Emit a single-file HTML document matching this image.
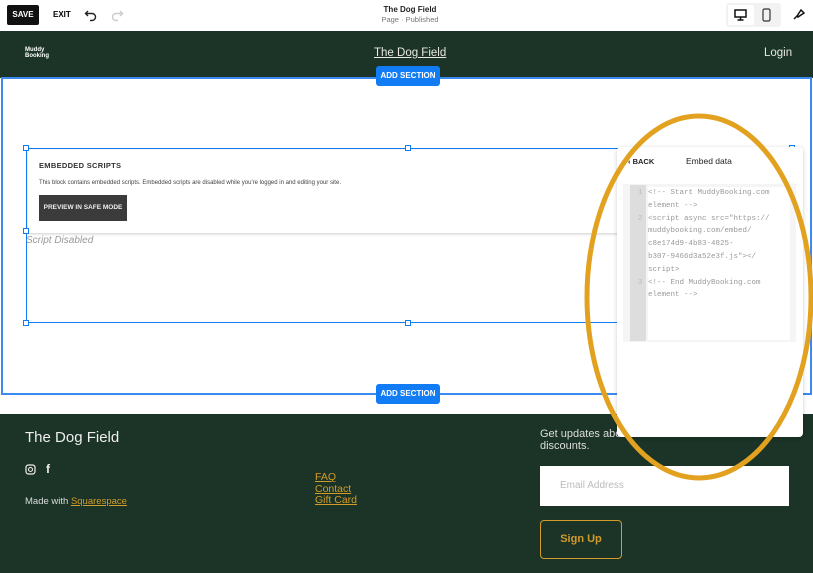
<!DOCTYPE html><html><head><style>
*{margin:0;padding:0;box-sizing:border-box}
body{width:813px;height:573px;overflow:hidden;font-family:"Liberation Sans",sans-serif;background:#fff;position:relative}
.a{position:absolute}
.dk{background:#1b3427}
.btn{background:#127cf5;color:#fff;font-size:8px;font-weight:bold;border-radius:3px;text-align:center;line-height:20px;width:64px;height:20px}
.h{width:6px;height:6px;border:1px solid #127cf5;background:#fff}
.code{font-family:"Liberation Mono",monospace;font-size:7.5px;color:#999;line-height:12.8px}
a{color:#d29c2a;text-decoration:underline}
</style></head><body>
<div class="a" style="left:7px;top:5px;width:32px;height:20px;background:#111;border-radius:2px;color:#fff;font-size:8px;font-weight:bold;text-align:center;line-height:20px">SAVE</div>
<div class="a" style="left:53px;top:10px;font-size:8px;font-weight:bold">EXIT</div>
<svg class="a" style="left:84px;top:8px" width="14" height="14" viewBox="0 0 14 14"><path d="M4 3L1.5 5.5 4 8M2 5.5h6a3.5 3.5 0 010 7H6" fill="none" stroke="#222" stroke-width="1.4"/></svg>
<svg class="a" style="left:110px;top:8px" width="14" height="14" viewBox="0 0 14 14"><path d="M10 3l2.5 2.5L10 8M12 5.5H6a3.5 3.5 0 000 7h2" fill="none" stroke="#ccc" stroke-width="1.4"/></svg>
<div class="a" style="left:330px;top:5px;width:160px;text-align:center;font-size:8px;font-weight:bold;color:#222">The Dog Field</div>
<div class="a" style="left:330px;top:15px;width:160px;text-align:center;font-size:7.5px;color:#777">Page · Published</div>
<div class="a" style="left:726px;top:3px;width:55px;height:24px;background:#f2f2f2;border-radius:3px"></div>
<div class="a" style="left:728px;top:5px;width:26px;height:20px;background:#fff;border-radius:2px"></div>
<svg class="a" style="left:734px;top:9px" width="13" height="12"><rect x="1" y="1" width="11" height="7" fill="none" stroke="#111" stroke-width="1.5"/><path d="M6.5 8v3M3.5 11h6" stroke="#111" stroke-width="1.5"/></svg>
<svg class="a" style="left:762px;top:8px" width="9" height="14"><rect x="1" y="1" width="7" height="12" rx="1.5" fill="none" stroke="#333" stroke-width="1.2"/></svg>
<svg class="a" style="left:792px;top:7px" width="14" height="14"><path d="M2 12l4-4M5 9l4-6 3 3-6 4z" fill="none" stroke="#111" stroke-width="1.5"/></svg>
<div class="a dk" style="left:0;top:31px;width:813px;height:47px"></div>
<div class="a" style="left:25px;top:47px;color:#fff;font-size:6px;font-weight:bold;line-height:6px">Muddy<br>Booking</div>
<div class="a" style="left:374px;top:47px;color:#e8e8e0;font-size:11.5px;text-decoration:underline">The Dog Field</div>
<div class="a" style="left:764px;top:47px;color:#e8e8e0;font-size:11.5px">Login</div>
<div class="a" style="left:1px;top:77px;width:811px;height:318px;border:2px solid #3b8af0"></div>
<div class="a" style="left:26px;top:148px;width:768px;height:175px;border:1.5px solid #127cf5"></div>
<div class="a" style="left:28px;top:150px;width:766px;height:83px;background:#fff;box-shadow:0 1px 3px rgba(0,0,0,.2)"></div>
<div class="a" style="left:39px;top:161px;font-size:7.5px;font-weight:bold;color:#333;letter-spacing:.3px">EMBEDDED SCRIPTS</div>
<div class="a" style="left:39px;top:180px;font-size:6px;color:#444">This block contains embedded scripts. Embedded scripts are disabled while you're logged in and editing your site.</div>
<div class="a" style="left:39px;top:195px;width:88px;height:26px;background:#3b3b3b;color:#eee;font-size:6.5px;font-weight:bold;text-align:center;line-height:26px">PREVIEW IN SAFE MODE</div>
<div class="a" style="left:26px;top:235px;font-size:10px;font-style:italic;color:#999">Script Disabled</div>
<div class="a h" style="left:23px;top:145px"></div><div class="a h" style="left:405px;top:145px"></div><div class="a h" style="left:23px;top:228px"></div><div class="a h" style="left:23px;top:320px"></div><div class="a h" style="left:405px;top:320px"></div><div class="a h" style="left:789px;top:145px"></div>
<div class="a dk" style="left:0;top:414px;width:813px;height:159px"></div>
<div class="a btn" style="left:376px;top:66px">ADD SECTION</div>
<div class="a btn" style="left:376px;top:384px">ADD SECTION</div>
<div class="a" style="left:25px;top:429px;color:#eee;font-size:15px">The Dog Field</div>
<svg class="a" style="left:25px;top:464px" width="11" height="11"><rect x="1" y="1" width="9" height="9" rx="2.5" fill="none" stroke="#eee" stroke-width="1.2"/><circle cx="5.5" cy="5.5" r="2" fill="none" stroke="#eee" stroke-width="1.1"/></svg>
<div class="a" style="left:46px;top:462px;color:#eee;font-size:12px;font-weight:bold">f</div>
<div class="a" style="left:25px;top:496px;color:#ddd;font-size:9.5px">Made with <a>Squarespace</a></div>
<div class="a" style="left:315px;top:472px;font-size:10.5px;line-height:11.7px"><a>FAQ</a><br><a>Contact</a><br><a>Gift Card</a></div>
<div class="a" style="left:540px;top:428px;color:#ddd;font-size:11px;line-height:12px">Get updates about<br>discounts.</div>
<div class="a" style="left:540px;top:466px;width:249px;height:40px;background:#fff"></div>
<div class="a" style="left:560px;top:480px;color:#bbb;font-size:10px">Email Address</div>
<div class="a" style="left:540px;top:520px;width:82px;height:39px;border:1.5px solid #d29c2a;border-radius:4px;color:#d29c2a;font-size:11px;font-weight:bold;text-align:center;line-height:36px">Sign Up</div>
<div class="a" style="left:617px;top:147px;width:186px;height:290px;background:#fff;border-radius:4px;box-shadow:0 1px 4px rgba(0,0,0,.2)"></div>
<div class="a" style="left:628px;top:157px;font-size:7.5px;font-weight:bold;color:#222">‹ BACK</div>
<div class="a" style="left:686px;top:156px;font-size:8.5px;color:#222">Embed data</div>
<div class="a" style="left:623px;top:184px;width:173px;height:158px;background:#f5f5f5"></div>
<div class="a" style="left:630px;top:185px;width:16px;height:156px;background:#ddd"></div>
<div class="a code" style="left:638px;top:187px;color:#bbb">1<br><br>2<br><br><br><br><br>3</div>
<div class="a code" style="left:648px;top:187px;width:142px;height:153px;background:#fff">&lt;!-- Start MuddyBooking.com<br>element --&gt;<br>&lt;script async src="https://<br>muddybooking.com/embed/<br>c8e174d9-4b83-4825-<br>b307-9466d3a52e3f.js"&gt;&lt;/<br>script&gt;<br>&lt;!-- End MuddyBooking.com<br>element --&gt;</div>
<svg class="a" style="left:0;top:0" width="813" height="573"><ellipse cx="699" cy="297" rx="112" ry="181" fill="none" stroke="#e2a21f" stroke-width="5"/></svg>
</body></html>
